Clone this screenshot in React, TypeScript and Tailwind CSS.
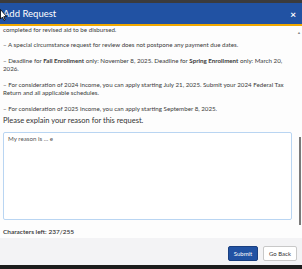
import React from "react";

export default function App() {
  return (
    <div className="relative w-[302px] h-[269px] flex flex-col overflow-hidden bg-[#fdfdfd]" style={{ fontFamily: "Lato, 'Open Sans', sans-serif" }}>
      <div className="h-[3px] bg-[#3b3b3d]" />
      <div className="h-[21px] bg-[#2152a3] flex items-center justify-between pl-[3px] pr-[6px]">
        <span className="text-white text-[9.5px] leading-none">Add Request</span>
        <span className="text-white text-[10px] leading-none font-bold">×</span>
      </div>
      <div className="h-[2px] bg-[#f0a800]" />
      <div className="relative flex-1 flex flex-col px-[3px] text-[#3a3a3a] text-[6.2px] leading-[8px]">
        <div className="pr-[8px]">
          <p className="mb-[7px]">completed for revised aid to be disbursed.</p>
          <p className="mb-[8px]">– A special circumstance request for review does not postpone any payment due dates.</p>
          <p className="mb-[8px]">
            – Deadline for <b>Fall Enrollment</b> only: November 8, 2025. Deadline for <b>Spring Enrollment</b> only: March 20, 2026.
          </p>
          <p className="mb-[8px]">
            – For consideration of 2024 income, you can apply starting July 21, 2025. Submit your 2024 Federal Tax Return and all applicable schedules.
          </p>
          <p className="mb-[3px]">– For consideration of 2025 income, you can apply starting September 8, 2025.</p>
        </div>
        <div className="text-[7.5px] leading-[10px] text-[#333]">Please explain your reason for this request.</div>
        <div className="mt-[6px] mr-[7px] h-[88px] border border-[#b9d5f2] rounded-[2px] bg-white px-[4px] py-[2px] text-[6.2px] leading-[8px] text-[#555]">
          My reason is ... e
        </div>
        <div className="mt-[8px] text-[6.5px] leading-[8px] font-semibold text-[#333]">Characters left: 237/255</div>
        <div className="absolute right-[1px] top-[111px] w-[2px] h-[88px] bg-[#7a7a7a]" />
        <div className="absolute right-[1px] top-[5px] text-[4px] leading-none text-[#888]">▲</div>
      </div>
      <div className="h-[27px] bg-[#f3f3f5] flex justify-end items-start pt-[8px] pr-[5px] gap-[5px]">
        <div className="w-[30px] h-[15px] bg-[#2152a3] border border-[#1a3f80] rounded-[2px] flex items-center justify-center text-white text-[6px]">Submit</div>
        <div className="w-[34px] h-[15px] bg-white border border-[#c8c8c8] rounded-[2px] flex items-center justify-center text-[#333] text-[6px]">Go Back</div>
      </div>
      <div className="h-[4px] bg-[#1c1c1c]" />
      <svg className="absolute left-0 top-[9px]" width="7" height="13" viewBox="0 0 7 13">
        <path d="M0.5 0.5 L0.5 10 L2.5 8 L4 11.5 L5.2 11 L3.8 7.6 L6.5 7.6 Z" fill="white" stroke="black" strokeWidth="0.8" />
      </svg>
    </div>
  );
}
